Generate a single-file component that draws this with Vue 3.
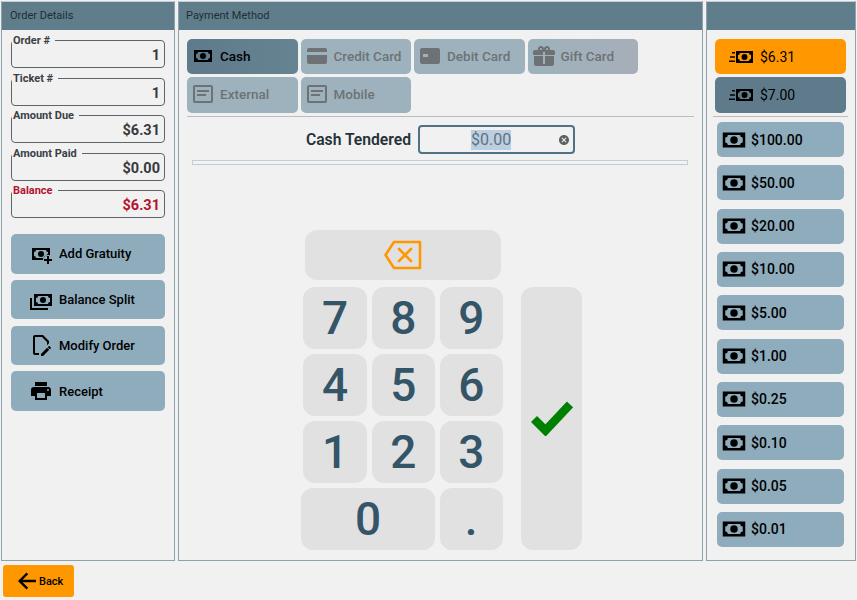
<template>
  <div class="page">
    <div class="panels">
      <!-- order details -->
      <section class="panel">
        <header class="panel-head">Order Details</header>
        <div class="details">
          <fieldset v-for="f in fields" :key="f.label" class="field" :class="{ alert: f.alert }">
            <legend>{{ f.label }}</legend>
            <div class="field-value">{{ f.value }}</div>
          </fieldset>
          <div class="actions">
            <button v-for="a in actions" :key="a.label" class="action">
              <svg class="icon" viewBox="0 0 24 24"><path :d="icons[a.icon]" /></svg>
              {{ a.label }}
            </button>
          </div>
        </div>
      </section>

      <!-- payment method -->
      <section class="panel">
        <header class="panel-head mid">Payment Method</header>
        <div class="payment">
          <div class="tabs">
            <button v-for="t in tabs" :key="t.label" class="tab" :class="{ active: t.active, gift: t.icon === 'gift' }">
              <svg class="icon" viewBox="0 0 24 24"><path :d="icons[t.icon]" /></svg>
              {{ t.label }}
            </button>
          </div>
          <hr class="rule" />
          <div class="tender">
            <span class="tender-label">Cash Tendered</span>
            <div class="tender-input">
              <span class="selected">$0.00</span>
              <svg class="clear" viewBox="0 0 24 24"><path :d="icons.clear" /></svg>
            </div>
          </div>
          <div class="progress"></div>

          <div class="keypad">
            <div class="keys">
              <button class="key backspace">
                <svg width="38" height="30" viewBox="0 0 38 30" fill="none" stroke="#ff9800" stroke-width="2.6" stroke-linejoin="round" stroke-linecap="round">
                  <path d="M10 2H36V28H10L1.5 15Z" />
                  <path d="M15 9L27 21M27 9L15 21" />
                </svg>
              </button>
              <div class="digits">
                <button v-for="k in keys" :key="k" class="key digit" :class="{ zero: k === '0' }">{{ k }}</button>
              </div>
            </div>
            <button class="key confirm">
              <svg width="42" height="35" viewBox="0 0 42 35" fill="none" stroke="#008000" stroke-width="8.5">
                <path d="M3 18L14.5 29.5L39 3.5" />
              </svg>
            </button>
          </div>
        </div>
      </section>

      <!-- quick amounts -->
      <section class="panel">
        <header class="panel-head"></header>
        <div class="amounts">
          <button class="quick exact">
            <svg class="icon" viewBox="0 0 24 24"><path :d="icons.cashFast" /></svg>
            $6.31
          </button>
          <button class="quick round">
            <svg class="icon" viewBox="0 0 24 24"><path :d="icons.cashFast" /></svg>
            $7.00
          </button>
          <hr class="rule wide" />
          <div class="bills">
            <button v-for="b in bills" :key="b" class="bill">
              <svg class="icon big" viewBox="0 0 24 24"><path :d="icons.cash" /></svg>
              {{ b }}
            </button>
          </div>
        </div>
      </section>
    </div>

    <button class="back">
      <svg class="icon" viewBox="0 0 24 24"><path :d="icons.back" /></svg>
      Back
    </button>
  </div>
</template>

<script setup>
const icons = {
  cash: 'M3,6H21V18H3V6M12,9A3,3 0 0,1 15,12A3,3 0 0,1 12,15A3,3 0 0,1 9,12A3,3 0 0,1 12,9M7,8A2,2 0 0,1 5,10V14A2,2 0 0,1 7,16H17A2,2 0 0,1 19,14V10A2,2 0 0,1 17,8H7Z',
  cashFast: 'M7,6H24V18H7V6M15.5,9A3,3 0 0,1 18.5,12A3,3 0 0,1 15.5,15A3,3 0 0,1 12.5,12A3,3 0 0,1 15.5,9M11,8A2,2 0 0,1 9,10V14A2,2 0 0,1 11,16H20A2,2 0 0,1 22,14V10A2,2 0 0,1 20,8H11ZM3,7H6V8.6H3ZM1,11.2H6V12.8H1ZM0,15.4H6V17H0Z',
  cashPlus: 'M3,6H21V13.4C20.4,13.1 19.7,13 19,13C16.2,13 14,15.2 14,18H3V6M12,9A3,3 0 0,1 15,12A3,3 0 0,1 12,15A3,3 0 0,1 9,12A3,3 0 0,1 12,9M7,8A2,2 0 0,1 5,10V14A2,2 0 0,1 7,16H14.4L19,11.5V10A2,2 0 0,1 17,8H7ZM18,14H20V17H23V19H20V22H18V19H15V17H18Z',
  cashMultiple: 'M5,6H23V18H5V6M14,9A3,3 0 0,1 17,12A3,3 0 0,1 14,15A3,3 0 0,1 11,12A3,3 0 0,1 14,9M9,8A2,2 0 0,1 7,10V14A2,2 0 0,1 9,16H19A2,2 0 0,1 21,14V10A2,2 0 0,1 19,8H9M1,10H3V20H19V22H1V10Z',
  fileEdit: 'M6 2C4.89 2 4 2.9 4 4V20C4 21.11 4.89 22 6 22H10V20H6V4H13L18 9V12.2L20 10.2V8L14 2H6M20.15 13C20 13 19.86 13.05 19.75 13.16L18.73 14.18L20.82 16.26L21.84 15.25C22.05 15.03 22.05 14.67 21.84 14.46L20.54 13.16C20.43 13.05 20.29 13 20.15 13M18.14 14.77L12 20.92V23H14.08L20.23 16.85L18.14 14.77Z',
  printer: 'M18,3H6V7H18M19,12A1,1 0 0,1 18,11A1,1 0 0,1 19,10A1,1 0 0,1 20,11A1,1 0 0,1 19,12M16,19H8V14H16M19,8H5A3,3 0 0,0 2,11V17H6V21H18V17H22V11A3,3 0 0,0 19,8Z',
  card: 'M4,4H20C21.1,4 22,4.9 22,6V18A2,2 0 0,1 20,20H4A2,2 0 0,1 2,18V6C2,4.9 2.9,4 4,4ZM2,8V11H22V8Z',
  debit: 'M4,4H20C21.1,4 22,4.9 22,6V18A2,2 0 0,1 20,20H4A2,2 0 0,1 2,18V6C2,4.9 2.9,4 4,4ZM5,10V13H10V10Z',
  gift: 'M9.06,1.93C7.17,1.92 5.33,3.74 6.17,6H3A2,2 0 0,0 1,8V10A1,1 0 0,0 2,11H11V8H13V11H22A1,1 0 0,0 23,10V8A2,2 0 0,0 21,6H17.83C19,2.73 14.6,0.42 12.57,3.24L12,4L11.43,3.22C10.8,2.33 9.93,1.94 9.06,1.93M9,4C9.89,4 10.34,5.08 9.71,5.71C9.08,6.34 8,5.89 8,5A1,1 0 0,1 9,4M15,4C15.89,4 16.34,5.08 15.71,5.71C15.08,6.34 14,5.89 14,5A1,1 0 0,1 15,4M2,12V20A2,2 0 0,0 4,22H20A2,2 0 0,0 22,20V12H13V20H11V12H2Z',
  note: 'M4,3H20A2,2 0 0,1 22,5V19A2,2 0 0,1 20,21H4A2,2 0 0,1 2,19V5A2,2 0 0,1 4,3M4,5V19H20V5H4M6,8H18V10H6V8M6,12H15V14H6V12Z',
  clear: 'M12,2C17.53,2 22,6.47 22,12C22,17.53 17.53,22 12,22C6.47,22 2,17.53 2,12C2,6.47 6.47,2 12,2M15.59,7L12,10.59L8.41,7L7,8.41L10.59,12L7,15.59L8.41,17L12,13.41L15.59,17L17,15.59L13.41,12L17,8.41L15.59,7Z',
  back: 'M22,10.8V13.2H8.6L14.2,18.8L12.5,20.5L4,12L12.5,3.5L14.2,5.2L8.6,10.8H22Z',
}

const fields = [
  { label: 'Order #', value: '1' },
  { label: 'Ticket #', value: '1' },
  { label: 'Amount Due', value: '$6.31' },
  { label: 'Amount Paid', value: '$0.00' },
  { label: 'Balance', value: '$6.31', alert: true },
]

const actions = [
  { label: 'Add Gratuity', icon: 'cashPlus' },
  { label: 'Balance Split', icon: 'cashMultiple' },
  { label: 'Modify Order', icon: 'fileEdit' },
  { label: 'Receipt', icon: 'printer' },
]

const tabs = [
  { label: 'Cash', icon: 'cash', active: true },
  { label: 'Credit Card', icon: 'card' },
  { label: 'Debit Card', icon: 'debit' },
  { label: 'Gift Card', icon: 'gift' },
  { label: 'External', icon: 'note' },
  { label: 'Mobile', icon: 'note' },
]

const keys = ['7', '8', '9', '4', '5', '6', '1', '2', '3', '0', '.']

const bills = ['$100.00', '$50.00', '$20.00', '$10.00', '$5.00', '$1.00', '$0.25', '$0.10', '$0.05', '$0.01']
</script>

<style>
body {
  background: #f1f1f1;
}
</style>

<style scoped>
.page {
  width: 857px;
  height: 600px;
  overflow: hidden;
  padding: 1px 1px 0 1px;
  box-sizing: border-box;
  background: #f1f1f1;
  font-family: Roboto, "Liberation Sans", sans-serif;
  color: #212121;
}

button {
  border: none;
  font-family: inherit;
  padding: 0;
}

.panels {
  display: grid;
  grid-template-columns: 174px 525px 150px;
  column-gap: 3px;
  height: 560px;
}

.panel {
  display: flex;
  flex-direction: column;
  border: 1px solid #8ea2ac;
  border-top-color: #c3ced4;
  box-sizing: border-box;
  min-height: 0;
}

.panel-head {
  height: 28px;
  flex: none;
  background: #607d8b;
  color: #1f2d36;
  font-size: 11px;
  line-height: 28px;
  padding-left: 8px;
}

.panel-head.mid {
  padding-left: 7px;
}

.icon {
  width: 24px;
  height: 24px;
  flex: none;
  fill: currentColor;
}

.icon.big {
  width: 30px;
  height: 30px;
}

/* left column */
.details {
  padding: 4px 9px 0 9px;
}

.field {
  margin: 0 0 3.5px;
  padding: 0 4px 0 0;
  height: 34px;
  box-sizing: border-box;
  border: 1px solid #5f6468;
  border-radius: 4px;
  min-width: 0;
}

.field legend {
  padding: 0 5px 0 1px;
  margin-left: 0;
  font-size: 11px;
  line-height: 13px;
  font-weight: 700;
  color: #3a4045;
}

.field-value {
  text-align: right;
  font-size: 14.5px;
  font-weight: 700;
  line-height: 18px;
  color: #37393c;
}

.field.alert legend,
.field.alert .field-value {
  color: #b5122e;
}

.actions {
  display: flex;
  flex-direction: column;
  gap: 6.3px;
  margin-top: 16px;
}

.action {
  display: flex;
  align-items: center;
  gap: 6px;
  height: 39.5px;
  padding-left: 18px;
  background: #8eacbc;
  border-radius: 5px;
  font-size: 13px;
  font-weight: 500;
  color: #000;
}

/* middle column */
.payment {
  flex: 1;
  display: flex;
  flex-direction: column;
  padding: 9px 8px 10px 8px;
  min-height: 0;
}

.tabs {
  display: grid;
  grid-template-columns: repeat(4, 110.5px);
  grid-template-rows: 35px 36px;
  gap: 3px;
}

.tab {
  display: flex;
  align-items: center;
  gap: 5px;
  padding: 0 0 2px 4px;
  border-radius: 5px;
  background: #9db2bc;
  color: #6f7275;
  font-size: 13.5px;
  font-weight: 500;
}

.tab.active {
  background: linear-gradient(90deg, #5f7b8b, #668392);
  color: #000;
}

.tab.gift {
  background: linear-gradient(90deg, #9db2bc, #a6aeb9);
}

.rule {
  margin: 3px 0 0;
  border: none;
  border-top: 1px solid #b9bdbf;
  height: 0;
}

.rule.wide {
  margin-left: -2px;
  margin-right: -1px;
}

.tender {
  display: flex;
  align-items: center;
  justify-content: center;
  gap: 7px;
  margin-top: 8px;
}

.tender-label {
  font-size: 15.7px;
  font-weight: 600;
  color: #263238;
}

.tender-input {
  position: relative;
  width: 157px;
  height: 29px;
  box-sizing: border-box;
  border: 2px solid #4f7286;
  border-radius: 4px;
  display: flex;
  align-items: center;
  padding-left: 51px;
  color: #5f7380;
  font-size: 16px;
}

.selected {
  background: #bccfe0;
  line-height: 20px;
}

.clear {
  position: absolute;
  right: 3px;
  top: 6.5px;
  width: 12px;
  height: 12px;
  fill: #5c6063;
}

.progress {
  height: 5px;
  box-sizing: border-box;
  margin: 6px 6px 0 5px;
  border: 1px solid #c5ccd8;
  background: #f1f3f6;
}

.keypad {
  margin-top: auto;
  display: flex;
  margin-left: 114px;
}

.key {
  background: #e1e1e1;
  border-radius: 12px;
  color: #345468;
}

.backspace {
  display: flex;
  align-items: center;
  justify-content: center;
  height: 50px;
  margin: 0 2px 7px 4px;
  width: 196px;
}

.digits {
  display: grid;
  grid-template-columns: 66px 63.5px 63.5px;
  grid-auto-rows: 62px;
  gap: 5px 4.5px;
}

.digit {
  font-size: 46px;
  font-weight: 500;
  line-height: 1;
  margin-left: 2px;
}

.digit:nth-child(n+2) {
  margin-left: 0;
}

.digit:nth-child(4),
.digit:nth-child(7) {
  margin-left: 2px;
}

.digit.zero {
  grid-column: span 2;
}

.confirm {
  display: flex;
  align-items: center;
  justify-content: center;
  width: 61px;
  height: 263px;
  margin-top: 57px;
  margin-left: 18px;
}

/* right column */
.amounts {
  padding: 9px 8px 0 8px;
}

.quick {
  display: flex;
  align-items: center;
  gap: 7px;
  width: 131px;
  height: 35px;
  padding-left: 14px;
  border-radius: 5px;
  font-size: 14px;
  color: #000;
}

.exact {
  background: #ff9800;
  margin-bottom: 3px;
}

.round {
  background: #5f7b8b;
  height: 36px;
}

.bills {
  display: flex;
  flex-direction: column;
  gap: 8.33px;
  margin-top: 5px;
  padding: 0 3px 0 2px;
}

.bill {
  display: flex;
  align-items: center;
  gap: 2px;
  height: 35px;
  padding-left: 2px;
  border-radius: 5px;
  background: #8eacbc;
  font-size: 14px;
  font-weight: 500;
  color: #000;
}

.back {
  display: flex;
  align-items: center;
  gap: 1px;
  width: 71px;
  height: 32px;
  margin: 4px 0 0 2px;
  padding-left: 11px;
  background: #ff9800;
  border-radius: 3px;
  font-size: 11px;
  font-weight: 500;
  color: #000;
}
</style>
